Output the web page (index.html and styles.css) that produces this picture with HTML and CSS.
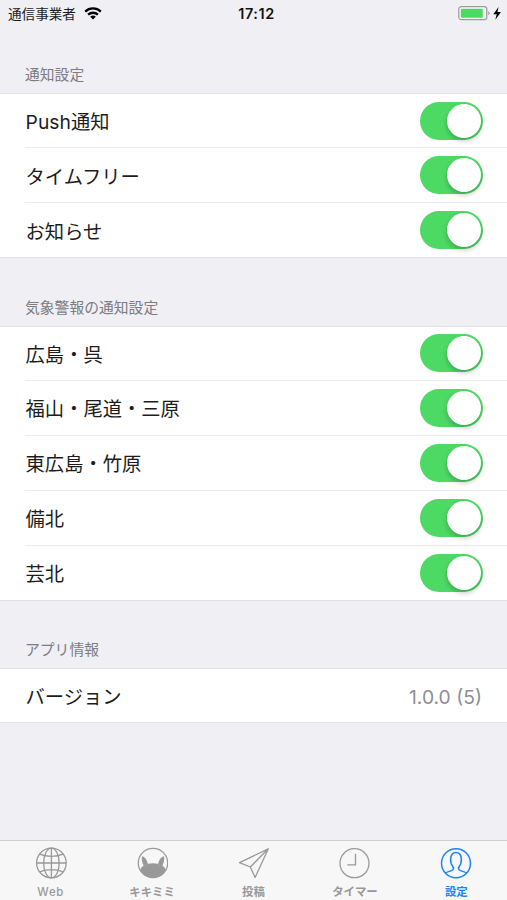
FILE: index.html
```html
<!DOCTYPE html>
<html lang="ja">
<head>
    <meta charset="UTF-8">
    <meta name="viewport" content="width=device-width, initial-scale=1.0">
    <title>設定</title>
    <link rel="stylesheet" href="styles.css">
</head>
<body>
    <header class="status-bar">
        <div class="carrier">
            <span>通信事業者</span>
            <svg class="wifi" width="18" height="13" viewBox="0 0 18 13" fill="none" stroke="#000" stroke-width="2.3">
                <path d="M1.2 4.6a11.2 11.2 0 0 1 15.6 0"/>
                <path d="M4.1 7.7a7.1 7.1 0 0 1 9.8 0"/>
                <path d="M9 12.6 6.2 9.8a4 4 0 0 1 5.6 0z" fill="#000" stroke="none"/>
            </svg>
        </div>
        <div class="time">17:12</div>
        <div class="battery">
            <svg width="44" height="16" viewBox="0 0 44 16">
                <rect x="0.8" y="1.7" width="28" height="13" rx="2.6" fill="#f8f8fa" stroke="#9a9a9e" stroke-width="1.2"/>
                <rect x="2.8" y="3.7" width="22" height="9" rx="1" fill="#4cd964"/>
                <path d="M30.3 6.2c1.8.6 1.8 3.4 0 4z" fill="#9a9a9e"/>
                <path d="M40.6 2 35.3 9.3h3.4L37.3 14.8l5.7-7.8h-3.6z" fill="#000"/>
            </svg>
        </div>
    </header>

    <main class="settings">
        <h2 class="section-title">通知設定</h2>
        <ul class="list">
            <li class="row"><span class="label">Push通知</span><button class="switch" aria-pressed="true"></button></li>
            <li class="row"><span class="label">タイムフリー</span><button class="switch" aria-pressed="true"></button></li>
            <li class="row"><span class="label">お知らせ</span><button class="switch" aria-pressed="true"></button></li>
        </ul>

        <h2 class="section-title">気象警報の通知設定</h2>
        <ul class="list">
            <li class="row"><span class="label">広島・呉</span><button class="switch" aria-pressed="true"></button></li>
            <li class="row"><span class="label">福山・尾道・三原</span><button class="switch" aria-pressed="true"></button></li>
            <li class="row"><span class="label">東広島・竹原</span><button class="switch" aria-pressed="true"></button></li>
            <li class="row"><span class="label">備北</span><button class="switch" aria-pressed="true"></button></li>
            <li class="row"><span class="label">芸北</span><button class="switch" aria-pressed="true"></button></li>
        </ul>

        <h2 class="section-title">アプリ情報</h2>
        <ul class="list">
            <li class="row"><span class="label">バージョン</span><span class="version">1.0.0 (5)</span></li>
        </ul>
    </main>

    <nav class="tab-bar">
        <a class="tab">
            <svg width="32" height="32" viewBox="-0.4 0 32 32" fill="none" stroke="currentColor" stroke-width="1.3">
                <circle cx="16" cy="16" r="14.8"/>
                <ellipse cx="16" cy="16" rx="7.8" ry="14.8"/>
                <path d="M16 1.2v29.6M1.2 16h29.6M4.4 7.2c6.6 2.9 16.6 2.9 23.2 0M4.4 24.8c6.6-2.9 16.6-2.9 23.2 0"/>
            </svg>
            <span class="latin">Web</span>
        </a>
        <a class="tab">
            <svg width="32" height="32" viewBox="-1 0 32 32">
                <circle cx="16" cy="16" r="14.7" fill="none" stroke="currentColor" stroke-width="1.3"/>
                <path d="M5 9.200c2.900.6 5.100 3.600 5.900 7.800L6.800 19C5 15.600 4.400 12.400 5 9.200zM27 9.200c-2.900.6-5.100 3.600-5.900 7.800l4.100 2c1.800-3.400 2.400-6.600 1.800-9.800z" fill="currentColor"/>
                <path d="M16 16.200c6.600 0 12 3 12.800 7C26.300 28 21.500 30.700 16 30.700S5.700 28 3.200 23.200c.8-4 6.200-7 12.800-7z" fill="currentColor"/>
            </svg>
            <span>キキミミ</span>
        </a>
        <a class="tab">
            <svg width="32" height="32" viewBox="0 0 32 32" fill="none" stroke="currentColor" stroke-width="1.3" stroke-linejoin="round">
                <path d="M30.3 1.8 1.5 15.6l10.8 4.4 4.8 10.500zM30.300 1.800 12.300 20"/>
            </svg>
            <span>投稿</span>
        </a>
        <a class="tab">
            <svg width="32" height="32" viewBox="0.5 0 32 32" fill="none" stroke="currentColor" stroke-width="1.3">
                <circle cx="16" cy="16.2" r="14.5"/>
                <path d="M17 6.8v11H8.8"/>
            </svg>
            <span>タイマー</span>
        </a>
        <a class="tab active">
            <svg width="32" height="32" viewBox="0 0 32 32" fill="none" stroke="currentColor" stroke-width="1.5" stroke-linejoin="round">
                <circle cx="16" cy="16.2" r="14.5"/>
                <path d="M5.500 26c1.500-1.500 5.700-1.700 7.200-3 .9-.9.800-2.600-.1-3.800-1.700-2-2.100-4.600-1.900-7.400C10.900 7.700 12.900 5.500 16 5.500s5.100 2.200 5.300 6.300c.2 2.800-.2 5.400-1.900 7.400-.9 1.200-1 2.900-.1 3.800 1.500 1.300 5.700 1.500 7.200 3"/>
            </svg>
            <span>設定</span>
        </a>
    </nav>
</body>
</html>
```

FILE: styles.css
```css
* {
    box-sizing: border-box;
}
body {
    display: flex;
    flex-direction: column;
    height: 100vh;
    margin: 0;
    font-family: Inter, "Noto Sans CJK JP", sans-serif;
    background-color: #efeff4;
    color: #1c1c1c;
}
.status-bar {
    display: grid;
    grid-template-columns: 1fr auto 1fr;
    align-items: center;
    height: 28px;
    padding: 0 5px 0 8px;
    font-size: 13.6px;
    line-height: 28px;
}
.carrier {
    display: flex;
    align-items: center;
    gap: 8px;
}
.wifi {
    margin-top: -2px;
}
.time {
    padding-left: 3px;
    color: #111;
    font-size: 14.4px;
    font-weight: 600;
    letter-spacing: 0.6px;
}
.battery {
    display: flex;
    justify-content: flex-end;
    margin-top: -2px;
}
.settings {
    flex: 1;
}
.section-title {
    display: flex;
    align-items: flex-end;
    height: 67.5px;
    margin: 0;
    padding: 0 25px 8px;
    color: #7c7c81;
    font-size: 14.8px;
    font-weight: 400;
    line-height: 20px;
}
.section-title:first-child {
    height: 65px;
}
.list {
    margin: 0;
    padding: 0;
    list-style: none;
    background-color: #fff;
    border-top: 1px solid #e2e2e6;
    border-bottom: 1px solid #e2e2e6;
}
.row {
    display: flex;
    align-items: center;
    justify-content: space-between;
    height: 55px;
    margin-left: 25px;
    padding-right: 24px;
    border-bottom: 1px solid #ebebed;
    font-size: 19.3px;
    line-height: 28px;
}
.row:first-child {
    height: 54px;
}
.row:last-child {
    height: 54px;
    border-bottom: none;
}
.row:only-child {
    height: 53px;
}
.label {
    padding: 3px 0 0 0.6px;
}
.version {
    padding: 2px 1px 0 0;
    color: #8e8e93;
}
.switch {
    width: 63px;
    height: 38px;
    padding: 2px;
    border: none;
    border-radius: 19px;
    background-color: #4cd964; /* iOS green */
    text-align: right;
}
.switch::after {
    content: "";
    display: inline-block;
    width: 34px;
    height: 34px;
    border-radius: 50%;
    background-color: #fff;
    box-shadow: 0 3px 5px rgba(0, 0, 0, 0.22);
}
.tab-bar {
    display: flex;
    height: 60px;
    background-color: #f7f7f8;
    border-top: 1px solid #cfcfd3;
}
.tab {
    display: flex;
    flex: 1;
    flex-direction: column;
    align-items: center;
    padding-top: 6px;
    color: #999;
    font-size: 11.4px;
    font-weight: 600;
    line-height: 14px;
}
.tab span {
    margin-top: 6px;
}
.tab .latin {
    font-weight: 500;
    letter-spacing: 0.7px;
}
.tab.active {
    color: #1a84fa;
}
```
